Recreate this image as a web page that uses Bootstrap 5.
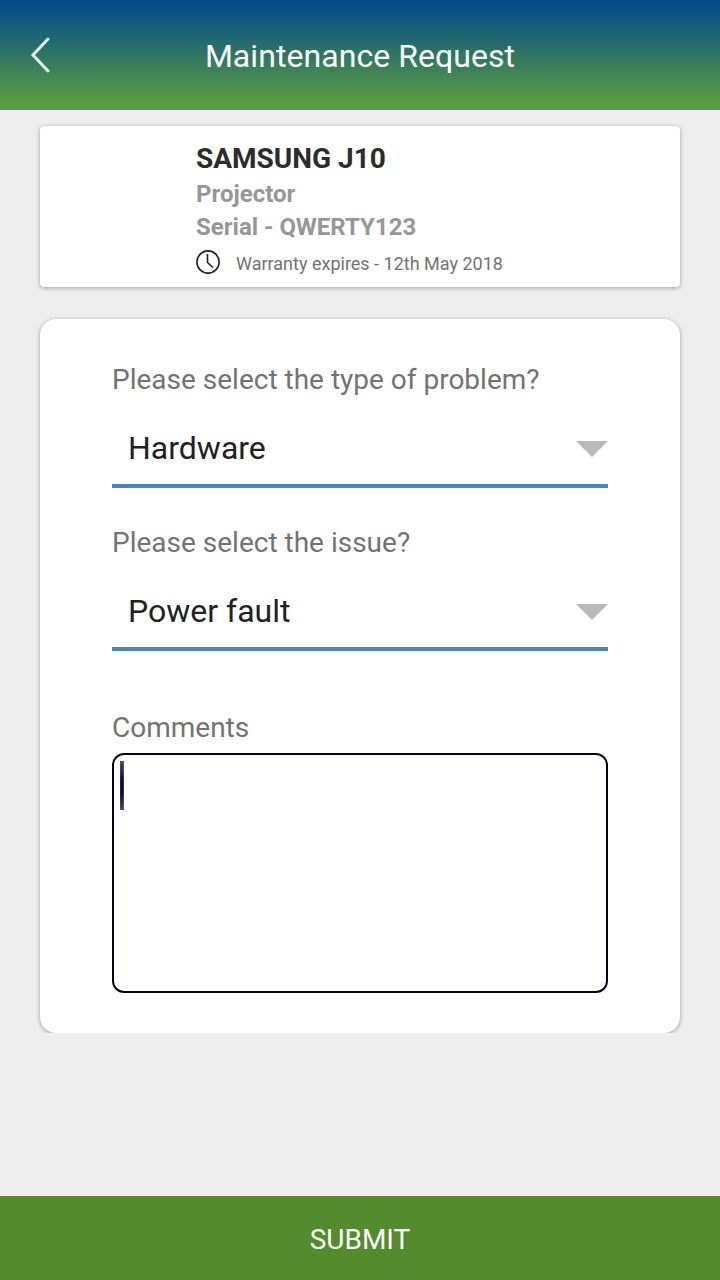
<!DOCTYPE html>
<html lang="en"><head><meta charset="utf-8"><meta name="viewport" content="width=device-width, initial-scale=1"><title>Maintenance Request</title>
<link href="https://cdn.jsdelivr.net/npm/bootstrap@5.3.0/dist/css/bootstrap.min.css" rel="stylesheet">
<style>
body{font-family:Roboto,sans-serif;background:#eee;height:1280px;overflow:hidden;line-height:1}
.app-header{height:110px;background:linear-gradient(#044d88 5%,#599b40 92%,#5c9f3f);display:grid;grid-template-columns:80px 1fr 80px}
.app-title{font-size:32px;color:#fff;font-weight:400;padding-top:2px;letter-spacing:.06px}
.device-card{margin:16px 40px 0;height:161px;padding:16px 0 0 156px;border-radius:4px;background:#fff;box-shadow:0 1px 4px rgba(0,0,0,.35)}
.device-name{font-size:28px;line-height:33px;font-weight:700;color:#2c2c2c;margin-bottom:3px}
.device-meta{font-size:24px;line-height:33px;font-weight:700;color:#979797}
.warranty{font-size:18px;color:#737373;height:28px;margin-top:4px}
.warranty span{padding-top:4px}
.request-card{margin:32px 40px 0;height:714px;padding:44px 72px 0;border-radius:16px;background:#fff;box-shadow:0 1px 4px rgba(0,0,0,.35);clip-path:inset(-5px -5px 0 -5px)}
.prompt{font-size:28px;line-height:33px;color:#737373}
.issue-prompt{margin-top:38px}
.comments-prompt{margin-top:60px}
.picker{height:76px;margin-top:16px;border:0;border-bottom:4px solid #4a83bd;font-size:32px;color:#212121;background:none;padding:0 0 0 16px}
.picker svg{margin-top:2px}
.comment-box{height:240px;border:2px solid #050420;border-radius:12px;margin-top:9px;padding:6px}
.caret{width:4px;height:49px;background:linear-gradient(90deg,#77738e55,transparent 40%,transparent 60%,#77738e99),linear-gradient(#49446b,#080638 40%,#080638 65%,#49446b)}
.submit-btn{height:84px;background:#548b2e;color:#fff;font-size:28px;border-radius:0}
.submit-btn span{display:block;padding-top:3px}
</style></head>
<body class="d-flex flex-column">
<header class="app-header align-items-center">
<button class="btn p-0 border-0 h-100" aria-label="Back"><svg width="80" height="110" viewBox="0 0 80 110" fill="none" stroke="#e8f2ee" stroke-width="3" stroke-linecap="round"><path d="M48 39 33 55 48 71"/></svg></button>
<h1 class="app-title text-center m-0">Maintenance Request</h1></header>
<main class="flex-grow-1">
<section class="device-card"><div class="device-name">SAMSUNG J10</div><div class="device-meta">Projector</div><div class="device-meta">Serial - QWERTY123</div>
<div class="warranty d-flex align-items-center gap-3"><svg width="24" height="24" fill="none" stroke="#222" stroke-width="1.600"><circle cx="12" cy="12" r="11.100"/><path d="M11.500 4v8.500l5.500 5"/></svg><span>Warranty expires - 12th May 2018</span></div></section>
<section class="request-card">
<div class="prompt">Please select the type of problem?</div>
<button class="picker w-100 d-flex justify-content-between align-items-center"><span>Hardware</span><svg width="32" height="16"><path d="M0 0h32L16 16z" fill="#bababa"/></svg></button>
<div class="prompt issue-prompt">Please select the issue?</div>
<button class="picker w-100 d-flex justify-content-between align-items-center"><span>Power fault</span><svg width="32" height="16"><path d="M0 0h32L16 16z" fill="#bababa"/></svg></button>
<div class="prompt comments-prompt">Comments</div>
<div class="comment-box" role="textbox" aria-label="Comments"><div class="caret"></div></div>
</section></main>
<button class="submit-btn btn w-100 p-0 border-0"><span>SUBMIT</span></button>
<script src="https://cdn.jsdelivr.net/npm/bootstrap@5.3.0/dist/js/bootstrap.bundle.min.js"></script>
</body></html>
